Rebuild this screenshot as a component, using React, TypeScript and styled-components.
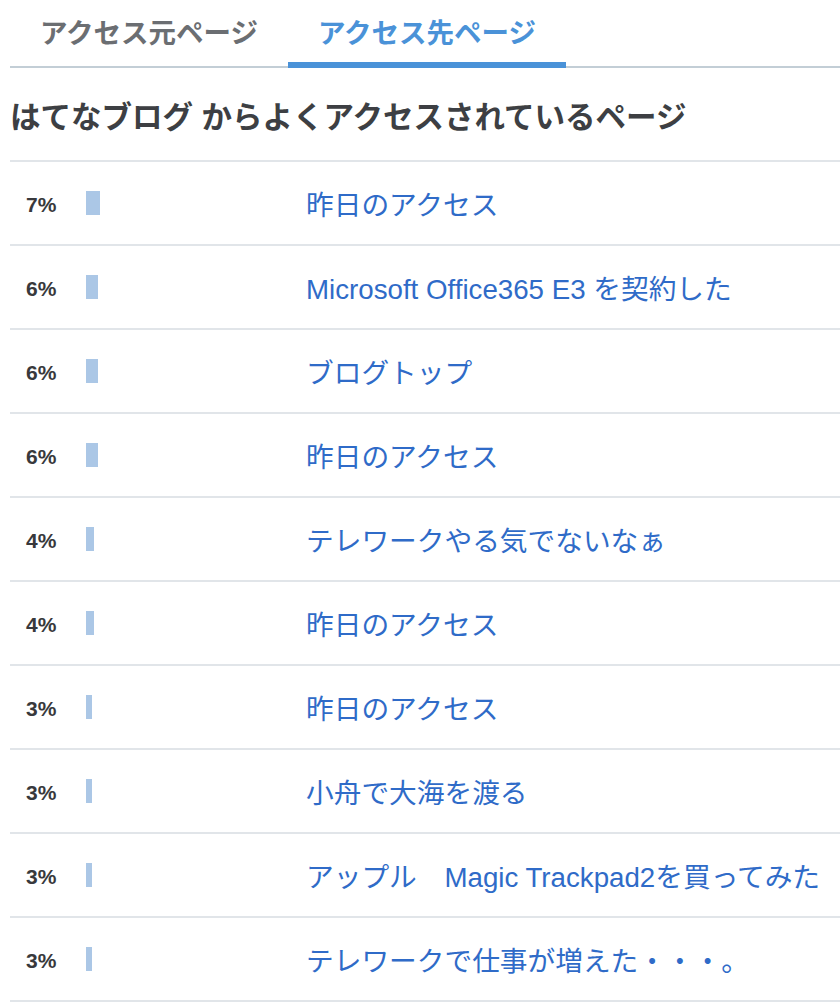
import * as React from 'react';
import styled, { createGlobalStyle } from 'styled-components';

interface Entry {
    id: number;
    percent: number;
    title: string;
}

const entries: Entry[] = [
    { id: 1, percent: 7, title: '昨日のアクセス' },
    { id: 2, percent: 6, title: 'Microsoft Office365 E3 を契約した' },
    { id: 3, percent: 6, title: 'ブログトップ' },
    { id: 4, percent: 6, title: '昨日のアクセス' },
    { id: 5, percent: 4, title: 'テレワークやる気でないなぁ' },
    { id: 6, percent: 4, title: '昨日のアクセス' },
    { id: 7, percent: 3, title: '昨日のアクセス' },
    { id: 8, percent: 3, title: '小舟で大海を渡る' },
    { id: 9, percent: 3, title: 'アップル　Magic Trackpad2を買ってみた' },
    { id: 10, percent: 3, title: 'テレワークで仕事が増えた・・・。' },
];

const GlobalStyle = createGlobalStyle`
    html, body {
        margin: 0;
        padding: 0;
        background: #ffffff;
        font-family: "Liberation Sans", "Noto Sans CJK JP", sans-serif;
    }
`;

const Wrapper = styled.div`
    padding-left: 10px;
    overflow: hidden;
`;

const Tabs = styled.div`
    display: flex;
    border-bottom: 2px solid #c3ced6;
`;

const Tab = styled.div<{ $active?: boolean }>`
    width: 278px;
    height: 60px;
    display: flex;
    align-items: center;
    justify-content: center;
    padding: 1px 0;
    font-size: 27.5px;
    font-weight: 700;
    color: ${p => (p.$active ? '#4a92d8' : '#6b6e72')};
    border-bottom: 6px solid ${p => (p.$active ? '#4a92d8' : 'transparent')};
    margin-bottom: -2px;
`;

const Heading = styled.h2`
    margin: 0;
    padding: 31px 0 25px;
    font-size: 30.5px;
    line-height: 36px;
    font-weight: 700;
    color: #3d3f43;
    white-space: nowrap;
    border-bottom: 2px solid #e1e5e9;
`;

const List = styled.div`
    display: flex;
    flex-direction: column;
`;

const Row = styled.div`
    display: flex;
    align-items: center;
    height: 82px;
    padding-left: 16px;
    border-bottom: 2px solid #e1e5e9;
`;

const Percent = styled.span`
    width: 60px;
    font-size: 21px;
    font-weight: 700;
    color: #38393c;
    padding-top: 3px;
`;

const BarCell = styled.div`
    width: 220px;
    display: flex;
    align-items: center;
`;

const Bar = styled.span`
    display: block;
    height: 24px;
    background: #abc7e6;
`;

const Link = styled.a`
    font-size: 27.7px;
    color: #2f6bc8;
    text-decoration: none;
    white-space: nowrap;
`;

const App: React.FC = () => {
    return (
        <Wrapper>
            <GlobalStyle />
            <Tabs>
                <Tab>アクセス元ページ</Tab>
                <Tab $active>アクセス先ページ</Tab>
            </Tabs>
            <Heading>はてなブログ からよくアクセスされているページ</Heading>
            <List>
                {entries.map(entry => (
                    <Row key={entry.id}>
                        <Percent>{entry.percent}%</Percent>
                        <BarCell>
                            <Bar style={{ width: entry.percent * 2 }} />
                        </BarCell>
                        <Link href="#">{entry.title}</Link>
                    </Row>
                ))}
            </List>
        </Wrapper>
    );
};

export default App;
